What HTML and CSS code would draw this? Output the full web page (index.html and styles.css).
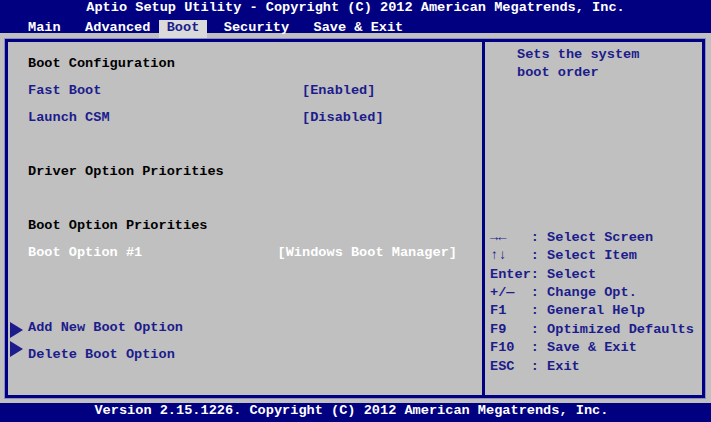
FILE: index.html
```html
<!DOCTYPE html>
<html lang="en">
<head>
  <meta charset="UTF-8">
  <title>Aptio Setup Utility</title>
  <link rel="stylesheet" href="styles.css">
</head>
<body>
  <div class="screen">
    <header class="topbar">
      <div class="title">Aptio Setup Utility - Copyright (C) 2012 American Megatrends, Inc.</div>
      <nav class="tabs">Main   Advanced  <span class="tab-active">Boot</span>   Security   Save &amp; Exit</nav>
    </header>

    <main class="body">
      <div class="frame">
        <section class="items">
          <div class="row heading">Boot Configuration</div>
          <div class="row option"><span class="label">Fast Boot</span><span class="value">[Enabled]</span></div>
          <div class="row option"><span class="label">Launch CSM</span><span class="value">[Disabled]</span></div>
          <div class="row"></div>
          <div class="row heading">Driver Option Priorities</div>
          <div class="row"></div>
          <div class="row heading">Boot Option Priorities</div>
          <div class="row option selected"><span class="label">Boot Option #1</span><span class="value wide">[Windows Boot Manager]</span></div>

          <div class="submenus">
            <div class="row option submenu">Add New Boot Option</div>
            <div class="row option submenu">Delete Boot Option</div>
          </div>
        </section>

        <aside class="help">
          <div class="help-text">Sets the system
boot order</div>
          <div class="keys">→←   : Select Screen
↑↓   : Select Item
Enter: Select
+/—  : Change Opt.
F1   : General Help
F9   : Optimized Defaults
F10  : Save &amp; Exit
ESC  : Exit</div>
        </aside>
      </div>
    </main>

    <footer class="footer">Version 2.15.1226. Copyright (C) 2012 American Megatrends, Inc. </footer>
  </div>
</body>
</html>
```

FILE: styles.css
```css
body {
  margin: 0;
  font-family: "Liberation Mono", "DejaVu Sans Mono", monospace;
  font-size: 13.6px;
  font-weight: bold;
  color: #1c1c8c;
}
.screen {
  width: 711px;
  height: 422px;
  display: flex;
  flex-direction: column;
  background: #c0c0c0;
  overflow: hidden;
}

/* top bar: title + menu tabs */
.topbar {
  height: 33px;
  flex: 0 0 33px;
  background: #000080;
  color: #fff;
}
.title {
  line-height: 15px;
  text-align: center;
}
.tabs {
  margin-top: 5px;
  padding-left: 28px;
  white-space: pre;
  line-height: 15px;
}
.tab-active {
  display: inline-block;
  padding: 0 1ch 3px;
  margin: 0 -1ch;
  background: #dadada;
  color: #1c1c8c;
}

/* main area */
.body {
  flex: 1;
  padding: 6px 6px 5px 5px;
  min-height: 0;
}
.frame {
  height: 100%;
  box-sizing: border-box;
  display: flex;
  border: 3px solid #000080;
  box-shadow: 0 0 0 1px #8c8cc6;
}
.items {
  flex: 0 0 474px;
  padding-top: 8px;
}
.row {
  height: 27px;
  line-height: 27px;
  padding-left: 20px;
  display: flex;
  white-space: pre;
}
.heading {
  color: #000;
}
.label {
  width: 274px;
}
.selected {
  color: #fff;
}
.value.wide {
  margin-left: -3ch;
}
.submenus {
  margin-top: 48px;
}
.submenu {
  position: relative;
}
.submenu::before {
  content: "";
  position: absolute;
  left: 2px;
  top: 8px;
  border-left: 13px solid #1c1c8c;
  border-top: 8px solid transparent;
  border-bottom: 8px solid transparent;
}
.submenu + .submenu::before {
  top: 0;
}

/* right help column */
.help {
  flex: 1;
  border-left: 3px solid #000080;
  display: flex;
  flex-direction: column;
  justify-content: space-between;
  white-space: pre;
}
.help-text {
  padding: 4px 0 0 32px;
  line-height: 18px;
}
.keys {
  padding: 0 0 19px 5px;
  line-height: 18.4px;
}

.footer {
  flex: 0 0 19px;
  height: 19px;
  line-height: 16px;
  background: #000080;
  color: #fff;
  text-align: center;
  white-space: pre;
}
```
